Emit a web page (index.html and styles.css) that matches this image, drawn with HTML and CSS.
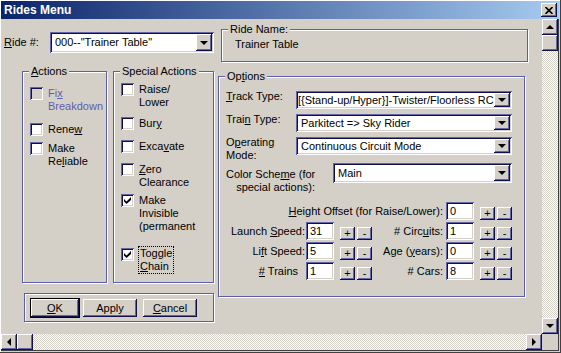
FILE: index.html
```html
<!DOCTYPE html>
<html>
<head>
    <title>Rides Menu</title>
    <link rel="stylesheet" href="styles.css">
</head>
<body>
    <div class="window">
        <!-- Title bar -->
        <div class="titlebar">
            <span class="title">Rides Menu</span>
            <div class="close-btn">
                <svg width="8" height="7" viewBox="0 0 8 7"><path d="M0.5 0L7.5 7M7.5 0L0.5 7" stroke="#000" stroke-width="1.6"/></svg>
            </div>
        </div>

        <div class="client">
            <div class="view">
                <div class="dialog">
                    <div class="top-row">
                        <div class="ride-field">
                            <span class="ride-label"><u>R</u>ide #:</span>
                            <div class="combo ride-combo">
                                <span class="combo-text">000--"Trainer Table"</span>
                                <span class="drop-btn"><i class="arrow-down"></i></span>
                            </div>
                        </div>
                        <div class="group ride-name">
                            <span class="group-title">Ride Name:</span>
                            <span>Trainer Table</span>
                        </div>
                    </div>

                    <div class="main-row">
                        <div class="left-col">
                            <div class="group-row">
                                <!-- Actions -->
                                <div class="group actions">
                                    <span class="group-title"><u>A</u>ctions</span>
                                    <div class="check disabled">
                                        <span class="box"></span>
                                        <span class="check-text">Fi<u>x</u><br>Breakdown</span>
                                    </div>
                                    <div class="check">
                                        <span class="box"></span>
                                        <span class="check-text">Rene<u>w</u></span>
                                    </div>
                                    <div class="check">
                                        <span class="box"></span>
                                        <span class="check-text">Make<br>Re<u>l</u>iable</span>
                                    </div>
                                </div>

                                <!-- Special Actions -->
                                <div class="group special">
                                    <span class="group-title">Special Actions</span>
                                    <div class="check">
                                        <span class="box"></span>
                                        <span class="check-text">Raise/<br>Lower</span>
                                    </div>
                                    <div class="check">
                                        <span class="box"></span>
                                        <span class="check-text">Bur<u>y</u></span>
                                    </div>
                                    <div class="check">
                                        <span class="box"></span>
                                        <span class="check-text">Exca<u>v</u>ate</span>
                                    </div>
                                    <div class="check">
                                        <span class="box"></span>
                                        <span class="check-text"><u>Z</u>ero<br>Clearance</span>
                                    </div>
                                    <div class="check">
                                        <span class="box"><svg width="7" height="7" viewBox="0 0 7 7"><path d="M0 2L2.5 4.5L7 0V3L2.5 7L0 4.5Z" fill="#000"/></svg></span>
                                        <span class="check-text">Make<br>Invisible<br>(permanent</span>
                                    </div>
                                    <div class="check">
                                        <span class="box"><svg width="7" height="7" viewBox="0 0 7 7"><path d="M0 2L2.5 4.5L7 0V3L2.5 7L0 4.5Z" fill="#000"/></svg></span>
                                        <span class="check-text focused">Toggle<br><u>C</u>hain</span>
                                    </div>
                                </div>
                            </div>

                            <div class="group buttons-group">
                                <div class="btn default"><span><u>O</u>K</span></div>
                                <div class="btn apply">Apply</div>
                                <div class="btn cancel"><span><u>C</u>ancel</span></div>
                            </div>
                        </div>

                        <!-- Options -->
                        <div class="group options">
                            <span class="group-title">Op<u>t</u>ions</span>
                            <div class="opt-grid">
                                <span class="opt-label"><u>T</u>rack Type:</span>
                                <div class="combo wide">
                                    <span class="combo-text tight">[{Stand-up/Hyper}]-Twister/Floorless RC</span>
                                    <span class="drop-btn"><i class="arrow-down"></i></span>
                                </div>
                                <span class="opt-label">Trai<u>n</u> Type:</span>
                                <div class="combo wide">
                                    <span class="combo-text">Parkitect =&gt; Sky Rider</span>
                                    <span class="drop-btn"><i class="arrow-down"></i></span>
                                </div>
                                <span class="opt-label">O<u>p</u>erating<br>Mode:</span>
                                <div class="combo wide">
                                    <span class="combo-text">Continuous Circuit Mode</span>
                                    <span class="drop-btn"><i class="arrow-down"></i></span>
                                </div>
                                <span class="opt-label scheme">Color Sche<u>m</u>e (for<br>special actions):</span>
                                <div class="combo scheme-combo">
                                    <span class="combo-text">Main</span>
                                    <span class="drop-btn"><i class="arrow-down"></i></span>
                                </div>
                            </div>

                            <div class="spin-grid">
                                <span class="spin-label wide"><u>H</u>eight Offset (for Raise/Lower):</span>
                                <div class="spin"><span class="field">0</span><span class="tiny-btn">+</span><span class="tiny-btn">-</span></div>

                                <span class="spin-label">Launch <u>S</u>peed:</span>
                                <div class="spin"><span class="field">31</span><span class="tiny-btn">+</span><span class="tiny-btn">-</span></div>
                                <span class="spin-label right"># Circ<u>u</u>its:</span>
                                <div class="spin"><span class="field">1</span><span class="tiny-btn">+</span><span class="tiny-btn">-</span></div>

                                <span class="spin-label">Li<u>f</u>t Speed:</span>
                                <div class="spin"><span class="field">5</span><span class="tiny-btn">+</span><span class="tiny-btn">-</span></div>
                                <span class="spin-label right">Age (<u>y</u>ears):</span>
                                <div class="spin"><span class="field">0</span><span class="tiny-btn">+</span><span class="tiny-btn">-</span></div>

                                <span class="spin-label trains"><u>#</u> Trains</span>
                                <div class="spin"><span class="field">1</span><span class="tiny-btn">+</span><span class="tiny-btn">-</span></div>
                                <span class="spin-label right"># Cars:</span>
                                <div class="spin"><span class="field">8</span><span class="tiny-btn">+</span><span class="tiny-btn">-</span></div>
                            </div>
                        </div>
                    </div>
                </div>

                <div class="vscroll">
                    <div class="raised sb-btn"><i class="arrow-up"></i></div>
                    <div class="raised sb-btn"></div>
                    <div class="track"></div>
                    <div class="raised sb-btn"><i class="arrow-down"></i></div>
                </div>
            </div>

            <div class="hscroll">
                <div class="raised sb-btn"><i class="arrow-left"></i></div>
                <div class="raised sb-btn"></div>
                <div class="track"></div>
                <div class="raised sb-btn"><i class="arrow-right"></i></div>
                <div class="corner"></div>
            </div>
        </div>
    </div>
</body>
</html>
```

FILE: styles.css
```css
* {
    margin: 0;
    padding: 0;
    box-sizing: border-box;
}

body {
    font-family: 'Liberation Sans', Arial, sans-serif;
    font-size: 11px;
    line-height: 13px;
    color: #000;
    background: #d4d0c8;
}

u {
    text-decoration-thickness: 1px;
}

.window {
    width: 561px;
    height: 353px;
    padding: 1px 2px 2px 1px;
    background: #d4d0c8;
    box-shadow: inset -1px -1px #404040, inset 1px 1px #fff;
    display: flex;
    flex-direction: column;
}

/* Title bar */
.titlebar {
    height: 18px;
    flex-shrink: 0;
    display: flex;
    align-items: center;
    justify-content: space-between;
    padding: 0 2px 0 3px;
    background: linear-gradient(to right, #0a246a, #a6caf0);
}

.title {
    color: #fff;
    font-weight: bold;
    font-size: 12px;
}

.close-btn,
.raised,
.drop-btn,
.tiny-btn,
.btn {
    background: #d4d0c8;
    box-shadow: inset -1px -1px #10104a, inset 1px 1px #fff, inset -2px -2px #6464a8;
}

.close-btn {
    width: 16px;
    height: 14px;
    display: flex;
    align-items: center;
    justify-content: center;
}

.client {
    flex: 1;
    display: flex;
    flex-direction: column;
    border-right: 1px solid #404040;
    border-bottom: 1px solid #404040;
}

.view {
    height: 315px;
    display: flex;
}

/* Scrollbars */
.vscroll {
    width: 16px;
    display: flex;
    flex-direction: column;
}

.hscroll {
    height: 16px;
    display: flex;
}

.sb-btn {
    width: 16px;
    height: 16px;
    flex-shrink: 0;
    display: flex;
    align-items: center;
    justify-content: center;
}

.track {
    flex: 1;
    background-color: #fff;
    background-image: conic-gradient(#d4d0c8 25%, #fff 0 50%, #d4d0c8 0 75%, #fff 0);
    background-size: 2px 2px;
}

.corner {
    width: 16px;
    background: #d4d0c8;
}

.arrow-down {
    border-left: 4px solid transparent;
    border-right: 4px solid transparent;
    border-top: 4px solid #000;
}

.arrow-up {
    border-left: 4px solid transparent;
    border-right: 4px solid transparent;
    border-bottom: 4px solid #000;
}

.arrow-left {
    border-top: 4px solid transparent;
    border-bottom: 4px solid transparent;
    border-right: 4px solid #000;
}

.arrow-right {
    border-top: 4px solid transparent;
    border-bottom: 4px solid transparent;
    border-left: 4px solid #000;
}

/* Dialog */
.dialog {
    width: 541px;
    padding: 10px 0 0 3px;
}

.top-row {
    display: flex;
    align-items: flex-start;
}

.ride-field {
    display: flex;
    align-items: center;
    margin-top: 3px;
}

.ride-label {
    width: 46px;
}

.group {
    position: relative;
    border: 1px solid #5c5cb0;
    box-shadow: inset 1px 1px #fff, 1px 1px #fff;
}

.group-title {
    position: absolute;
    top: -7px;
    left: 6px;
    padding: 0 2px;
    background: #d4d0c8;
    white-space: nowrap;
}

.ride-name {
    margin-left: 7px;
    width: 307px;
    height: 33px;
    padding: 8px 0 0 13px;
}

.main-row {
    display: flex;
    align-items: flex-start;
    margin-top: 9px;
}

.left-col {
    margin-left: 18px;
}

.group-row {
    display: flex;
    gap: 6px;
}

.actions {
    width: 85px;
    height: 212px;
    padding: 15px 0 0 7px;
    display: grid;
    grid-template-rows: 36px 19px auto;
    align-content: start;
}

.special {
    width: 101px;
    height: 212px;
    padding: 11px 0 0 7px;
    display: grid;
    grid-template-rows: 34px 23px 23px 31px 54px auto;
    align-content: start;
}

/* Checkboxes */
.check {
    display: flex;
    align-items: flex-start;
    gap: 5px;
}

.box,
.field,
.combo {
    background: #fff;
    box-shadow: inset 1px 1px #6464a8, inset -1px -1px #fff, inset 2px 2px #10104a, inset -2px -2px #d4d0c8;
}

.box {
    width: 13px;
    height: 13px;
    flex-shrink: 0;
    display: flex;
    align-items: center;
    justify-content: center;
}

.disabled .box {
    background: #d4d0c8;
}

.disabled .check-text {
    color: #5e5eb0;
}

.check-text {
    white-space: nowrap;
}

.focused {
    border: 1px dotted #000;
    margin: -2px 0 0 -1px;
    padding: 0 1px;
}

/* Buttons */
.buttons-group {
    margin: 10px 0 0 2px;
    width: 190px;
    height: 29px;
    padding: 4px 0 0 5px;
    display: flex;
    align-items: flex-start;
}

.btn {
    height: 18px;
    width: 54px;
    margin-top: 1px;
    display: flex;
    align-items: center;
    justify-content: center;
}

.btn.default {
    width: 50px;
    height: 20px;
    margin-top: 0;
    border: 1px solid #000;
}

.apply {
    margin-left: 3px;
}

.cancel {
    margin-left: 6px;
}

/* Options */
.options {
    margin: 5px 0 0 4px;
    width: 307px;
    height: 221px;
    padding: 14px 0 0 7px;
}

.opt-grid {
    display: grid;
    grid-template-columns: 70px 37px 179px;
    grid-template-rows: 23px 23px 26px auto;
}

.opt-label {
    margin-top: -1px;
    white-space: nowrap;
}

.opt-label.scheme {
    grid-column: 1 / 3;
    text-align: right;
    padding-right: 18px;
    margin-top: 5px;
}

.combo {
    display: flex;
    height: 18px;
    padding: 2px;
}

.combo.wide {
    grid-column: 2 / 4;
}

.ride-combo {
    width: 164px;
    height: 21px;
}

.scheme-combo {
    height: 20px;
}

.combo-text {
    flex: 1;
    padding-left: 3px;
    white-space: nowrap;
    overflow: hidden;
    display: flex;
    align-items: center;
}

.combo-text.tight {
    padding-left: 0;
}

.drop-btn {
    width: 16px;
    display: flex;
    align-items: center;
    justify-content: center;
}

/* Spinners */
.spin-grid {
    margin-top: 8px;
    display: grid;
    grid-template-columns: 80px 66px 74px 66px;
    grid-auto-rows: 18px;
    row-gap: 2px;
}

.spin-label {
    text-align: right;
    padding-right: 1px;
    align-self: center;
    white-space: nowrap;
}

.spin-label.wide {
    grid-column: 1 / 4;
    padding-right: 3px;
}

.spin-label.right {
    padding-right: 3px;
}

.spin-label.trains {
    padding-right: 8px;
}

.spin {
    display: flex;
    align-items: flex-end;
}

.field {
    width: 28px;
    height: 18px;
    padding: 3px 0 0 4px;
}

.tiny-btn {
    width: 15px;
    height: 13px;
    margin-left: 2px;
    display: flex;
    align-items: center;
    justify-content: center;
    line-height: 11px;
}

.field + .tiny-btn {
    margin-left: 6px;
}
```
